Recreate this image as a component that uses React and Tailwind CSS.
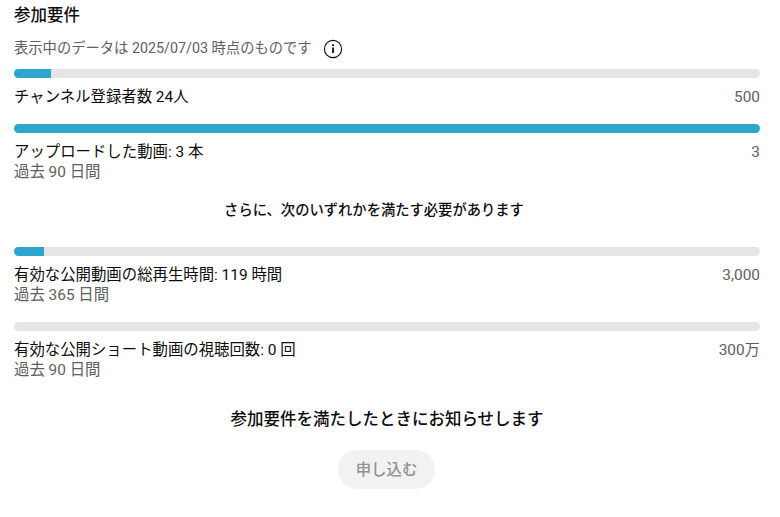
import React from "react";

const Bar = ({ percent }) => (
  <div className="h-[9px] w-full overflow-hidden rounded-full bg-[#e5e5e5]">
    <div className="h-full bg-[#2ea5cc]" style={{ width: `${percent}%` }}></div>
  </div>
);

const Requirement = ({ percent, label, goal, period }) => (
  <div>
    <Bar percent={percent} />
    <div className="mt-[9px] flex justify-between text-[15.4px] leading-5 text-[#0d0d0d]">
      <span>{label}</span>
      <span className="text-[#606060]">{goal}</span>
    </div>
    {period && <div className="text-[15.4px] leading-5 text-[#606060]">{period}</div>}
  </div>
);

const InfoIcon = () => (
  <svg className="size-5" viewBox="0 0 20 20" fill="none" stroke="#0d0d0d">
    <circle cx="10" cy="10" r="8.6" strokeWidth="1.1" />
    <path d="M10 8.5v5.5" strokeWidth="1.8" />
    <path d="M10 5.2v1.8" strokeWidth="1.8" />
  </svg>
);

export default function App() {
  return (
    <div className="h-[517px] w-full bg-white pl-3.5 pr-5 pt-1 font-[Roboto,'Noto_Sans_CJK_JP',sans-serif]">
      <h2 className="text-[16.5px] font-medium leading-6 text-[#0d0d0d]">参加要件</h2>
      <div className="mt-[11px] flex h-5 items-center gap-[11px] text-[14.3px] text-[#606060]">
        <span>表示中のデータは 2025/07/03 時点のものです</span>
        <InfoIcon />
      </div>

      <div className="mt-2.5 flex flex-col gap-[17px]">
        <Requirement percent={5} label="チャンネル登録者数 24人" goal="500" />
        <Requirement percent={100} label="アップロードした動画: 3 本" goal="3" period="過去 90 日間" />
      </div>

      <p className="my-[18px] pr-[26px] text-center text-[14.3px] font-medium leading-5 text-[#0d0d0d]">
        さらに、次のいずれかを満たす必要があります
      </p>

      <div className="mt-[27px] flex flex-col gap-[17px]">
        <Requirement percent={4} label="有効な公開動画の総再生時間: 119 時間" goal="3,000" period="過去 365 日間" />
        <Requirement percent={0} label="有効な公開ショート動画の視聴回数: 0 回" goal="300万" period="過去 90 日間" />
      </div>

      <div className="mt-7 flex flex-col items-center">
        <p className="text-[16.5px] font-medium leading-6 text-[#0d0d0d]">参加要件を満たしたときにお知らせします</p>
        <button className="mr-px mt-[18px] h-[39px] w-[97px] rounded-full bg-[#f2f2f2] pt-0.5 text-[15.4px] font-medium text-[#909090]" disabled>
          申し込む
        </button>
      </div>
    </div>
  );
}
